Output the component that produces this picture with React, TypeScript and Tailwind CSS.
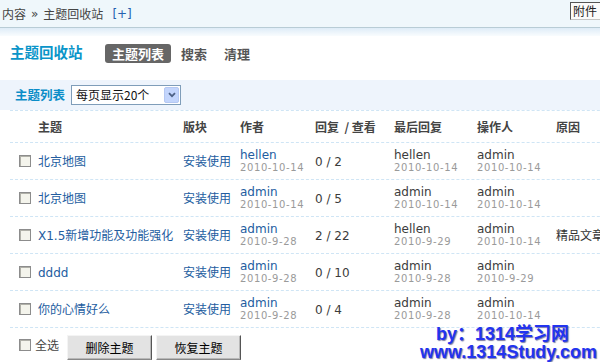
import type { ReactNode } from 'react'

const latin = '[font-family:"DejaVu_Sans","Noto_Sans_CJK_SC",sans-serif]'
const cjk = '[font-family:"Noto_Sans_CJK_SC","DejaVu_Sans",sans-serif]'

type Row = {
  subject: string
  author: [string, string]
  reply: string
  last: [string, string]
  operator: [string, string]
  reason?: string
}

const rows: Row[] = [
  { subject: '北京地图', author: ['hellen', '2010-10-14'], reply: '0 / 2', last: ['hellen', '2010-10-14'], operator: ['admin', '2010-10-14'] },
  { subject: '北京地图', author: ['admin', '2010-10-14'], reply: '0 / 5', last: ['admin', '2010-10-14'], operator: ['admin', '2010-10-14'] },
  { subject: 'X1.5新增功能及功能强化', author: ['admin', '2010-9-28'], reply: '2 / 22', last: ['hellen', '2010-9-29'], operator: ['admin', '2010-10-14'], reason: '精品文章' },
  { subject: 'dddd', author: ['admin', '2010-9-28'], reply: '0 / 10', last: ['admin', '2010-9-28'], operator: ['admin', '2010-9-29'] },
  { subject: '你的心情好么', author: ['admin', '2010-9-28'], reply: '0 / 4', last: ['admin', '2010-9-28'], operator: ['admin', '2010-10-14'] },
]

function Checkbox() {
  return (
    <span className="block size-[12px] shrink-0 border border-[#8c8c8c] bg-[#f4f4ec] shadow-[inset_1px_1px_0_#b0b0a8]" />
  )
}

function Stack({ name, date, link }: { name: string; date: string; link?: boolean }) {
  return (
    <div className={latin}>
      <p className={`text-[12px] leading-[14px] ${link ? 'text-[#235d9f]' : 'text-[#3c3c3c]'}`}>{name}</p>
      <p className="text-[10px] leading-[12px] tracking-[0.6px] text-[#9a9a9a]">{date}</p>
    </div>
  )
}

function Cols({ c, children }: { c: ReactNode[]; children?: ReactNode }) {
  const widths = ['w-[145px]', 'w-[57px]', 'w-[75px]', 'w-[79px]', 'w-[83px]', 'w-[79px]', 'w-[60px]']
  return (
    <>
      {children}
      {c.map((node, i) => (
        <div key={i} className={`${widths[i]} shrink-0 whitespace-nowrap`}>
          {node}
        </div>
      ))}
    </>
  )
}

function Button({ label }: { label: string }) {
  return (
    <button className="h-[25px] w-[85px] border border-t-[#f4f4f4] border-l-[#f4f4f4] border-r-[#555] border-b-[#888] bg-[#e3e3e3] text-[12px] text-black shadow-[inset_-1px_-1px_0_#b8b8b8]">
      {label}
    </button>
  )
}

export default function App() {
  return (
    <div className={`relative h-[362px] w-[600px] overflow-hidden bg-white ${cjk}`}>
      {/* breadcrumb bar */}
      <div className="flex h-[28px] items-center justify-between border-b border-[#b8ccd5] bg-[#eff7fb] pl-[2px]">
        <p className="flex items-center text-[12px] text-[#444]">
          <span>内容</span>
          <span className="mx-[5px] [font-family:'DejaVu_Sans',sans-serif]">»</span>
          <span>主题回收站</span>
          <span className="ml-[9px] text-[#2461b0] [font-family:'DejaVu_Sans',sans-serif]">[+]</span>
        </p>
        <div className="mt-[2px] h-[18px] w-[30px] self-start border-t border-l border-b border-t-[#555] border-l-[#555] border-b-[#c4c4c4] bg-[#fbfbfb] pl-[2px] text-[12px] leading-[16px] text-[#222]">
          附件
        </div>
      </div>
      <div className="h-[8px] bg-linear-to-b from-[#deecf7] to-[#f9fcfe]" />

      {/* title + tabs */}
      <div className="flex h-[44px] items-start pt-[8px] pl-[10px]">
        <h1 className="h-[19px] w-[95px] text-[14.5px] leading-[15px] font-bold text-[#0b95c9]">主题回收站</h1>
        <span className="h-[19px] rounded-[3px] bg-[#666] px-[7px] text-[13px] leading-[19px] font-bold text-white">主题列表</span>
        <span className="ml-[10px] text-[13px] leading-[19px] font-bold text-[#555]">搜索</span>
        <span className="ml-[17px] text-[13px] leading-[19px] font-bold text-[#555]">清理</span>
      </div>

      {/* filter bar */}
      <div className="flex h-[30px] items-center bg-[#eef4fc] pl-[15px]">
        <span className="w-[56px] text-[12.5px] font-bold text-[#0b8dc8]">主题列表</span>
        <div className="flex h-[20px] w-[110px] items-center justify-between border border-[#7f9db9] bg-white pl-[4px]">
          <span className="text-[12px] leading-[14px] text-[#111]">每页显示20个</span>
          <span className="mr-[1px] flex h-[16px] w-[15px] items-center justify-center rounded-[2px] border border-[#b5c8f2] bg-[#c3d5fc]">
            <svg width="8" height="6" viewBox="0 0 8 6">
              <path d="M1 1.2 L4 4.2 L7 1.2" fill="none" stroke="#4d6185" strokeWidth="1.8" />
            </svg>
          </span>
        </div>
      </div>

      {/* table */}
      <div className="ml-[10px] w-[640px]">
        <div className="flex h-[32px] items-center border-t border-dashed border-[#cfe5f5] text-[12px] font-bold text-[#444]">
          <Cols c={['主题', '版块', '作者', <span className="whitespace-pre">{'回复  / 查看'}</span>, '最后回复', '操作人', '原因']}>
            <div className="w-[28px] shrink-0" />
          </Cols>
        </div>
        {rows.map((r, i) => (
          <div key={i} className="flex h-[37px] items-center border-t border-dashed border-[#cfe5f5] text-[12px]">
            <Cols
              c={[
                <span className={`text-[#235d9f] ${latin}`}>{r.subject}</span>,
                <span className="text-[#235d9f]">安装使用</span>,
                <Stack name={r.author[0]} date={r.author[1]} link />,
                <span className={`text-[#3c3c3c] ${latin}`}>{r.reply}</span>,
                <Stack name={r.last[0]} date={r.last[1]} />,
                <Stack name={r.operator[0]} date={r.operator[1]} />,
                <span className="text-[#333]">{r.reason ?? ''}</span>,
              ]}
            >
              <div className="w-[28px] shrink-0 pl-[9px]">
                <Checkbox />
              </div>
            </Cols>
          </div>
        ))}
        <div className="flex items-start border-t border-dashed border-[#cfe5f5] pt-[7px] pl-[9px]">
          <div className="mt-[3px] flex items-center">
            <Checkbox />
            <span className="ml-[4px] text-[12px] leading-[14px] text-[#444]">全选</span>
          </div>
          <div className="ml-[8px] flex gap-[4px]">
            <Button label="删除主题" />
            <Button label="恢复主题" />
          </div>
        </div>
      </div>

      {/* watermark overlay */}
      <div className="absolute top-[325px] left-[420px] [font-family:'Liberation_Sans','Noto_Sans_CJK_SC',sans-serif] text-[18px] leading-[18px] font-bold text-[#2233f0] [text-shadow:1px_1px_1px_#7c7ca8]">
        <p className="ml-[16px] whitespace-nowrap">by：1314学习网</p>
        <p className="whitespace-nowrap">www.1314Study.com</p>
      </div>
    </div>
  )
}
